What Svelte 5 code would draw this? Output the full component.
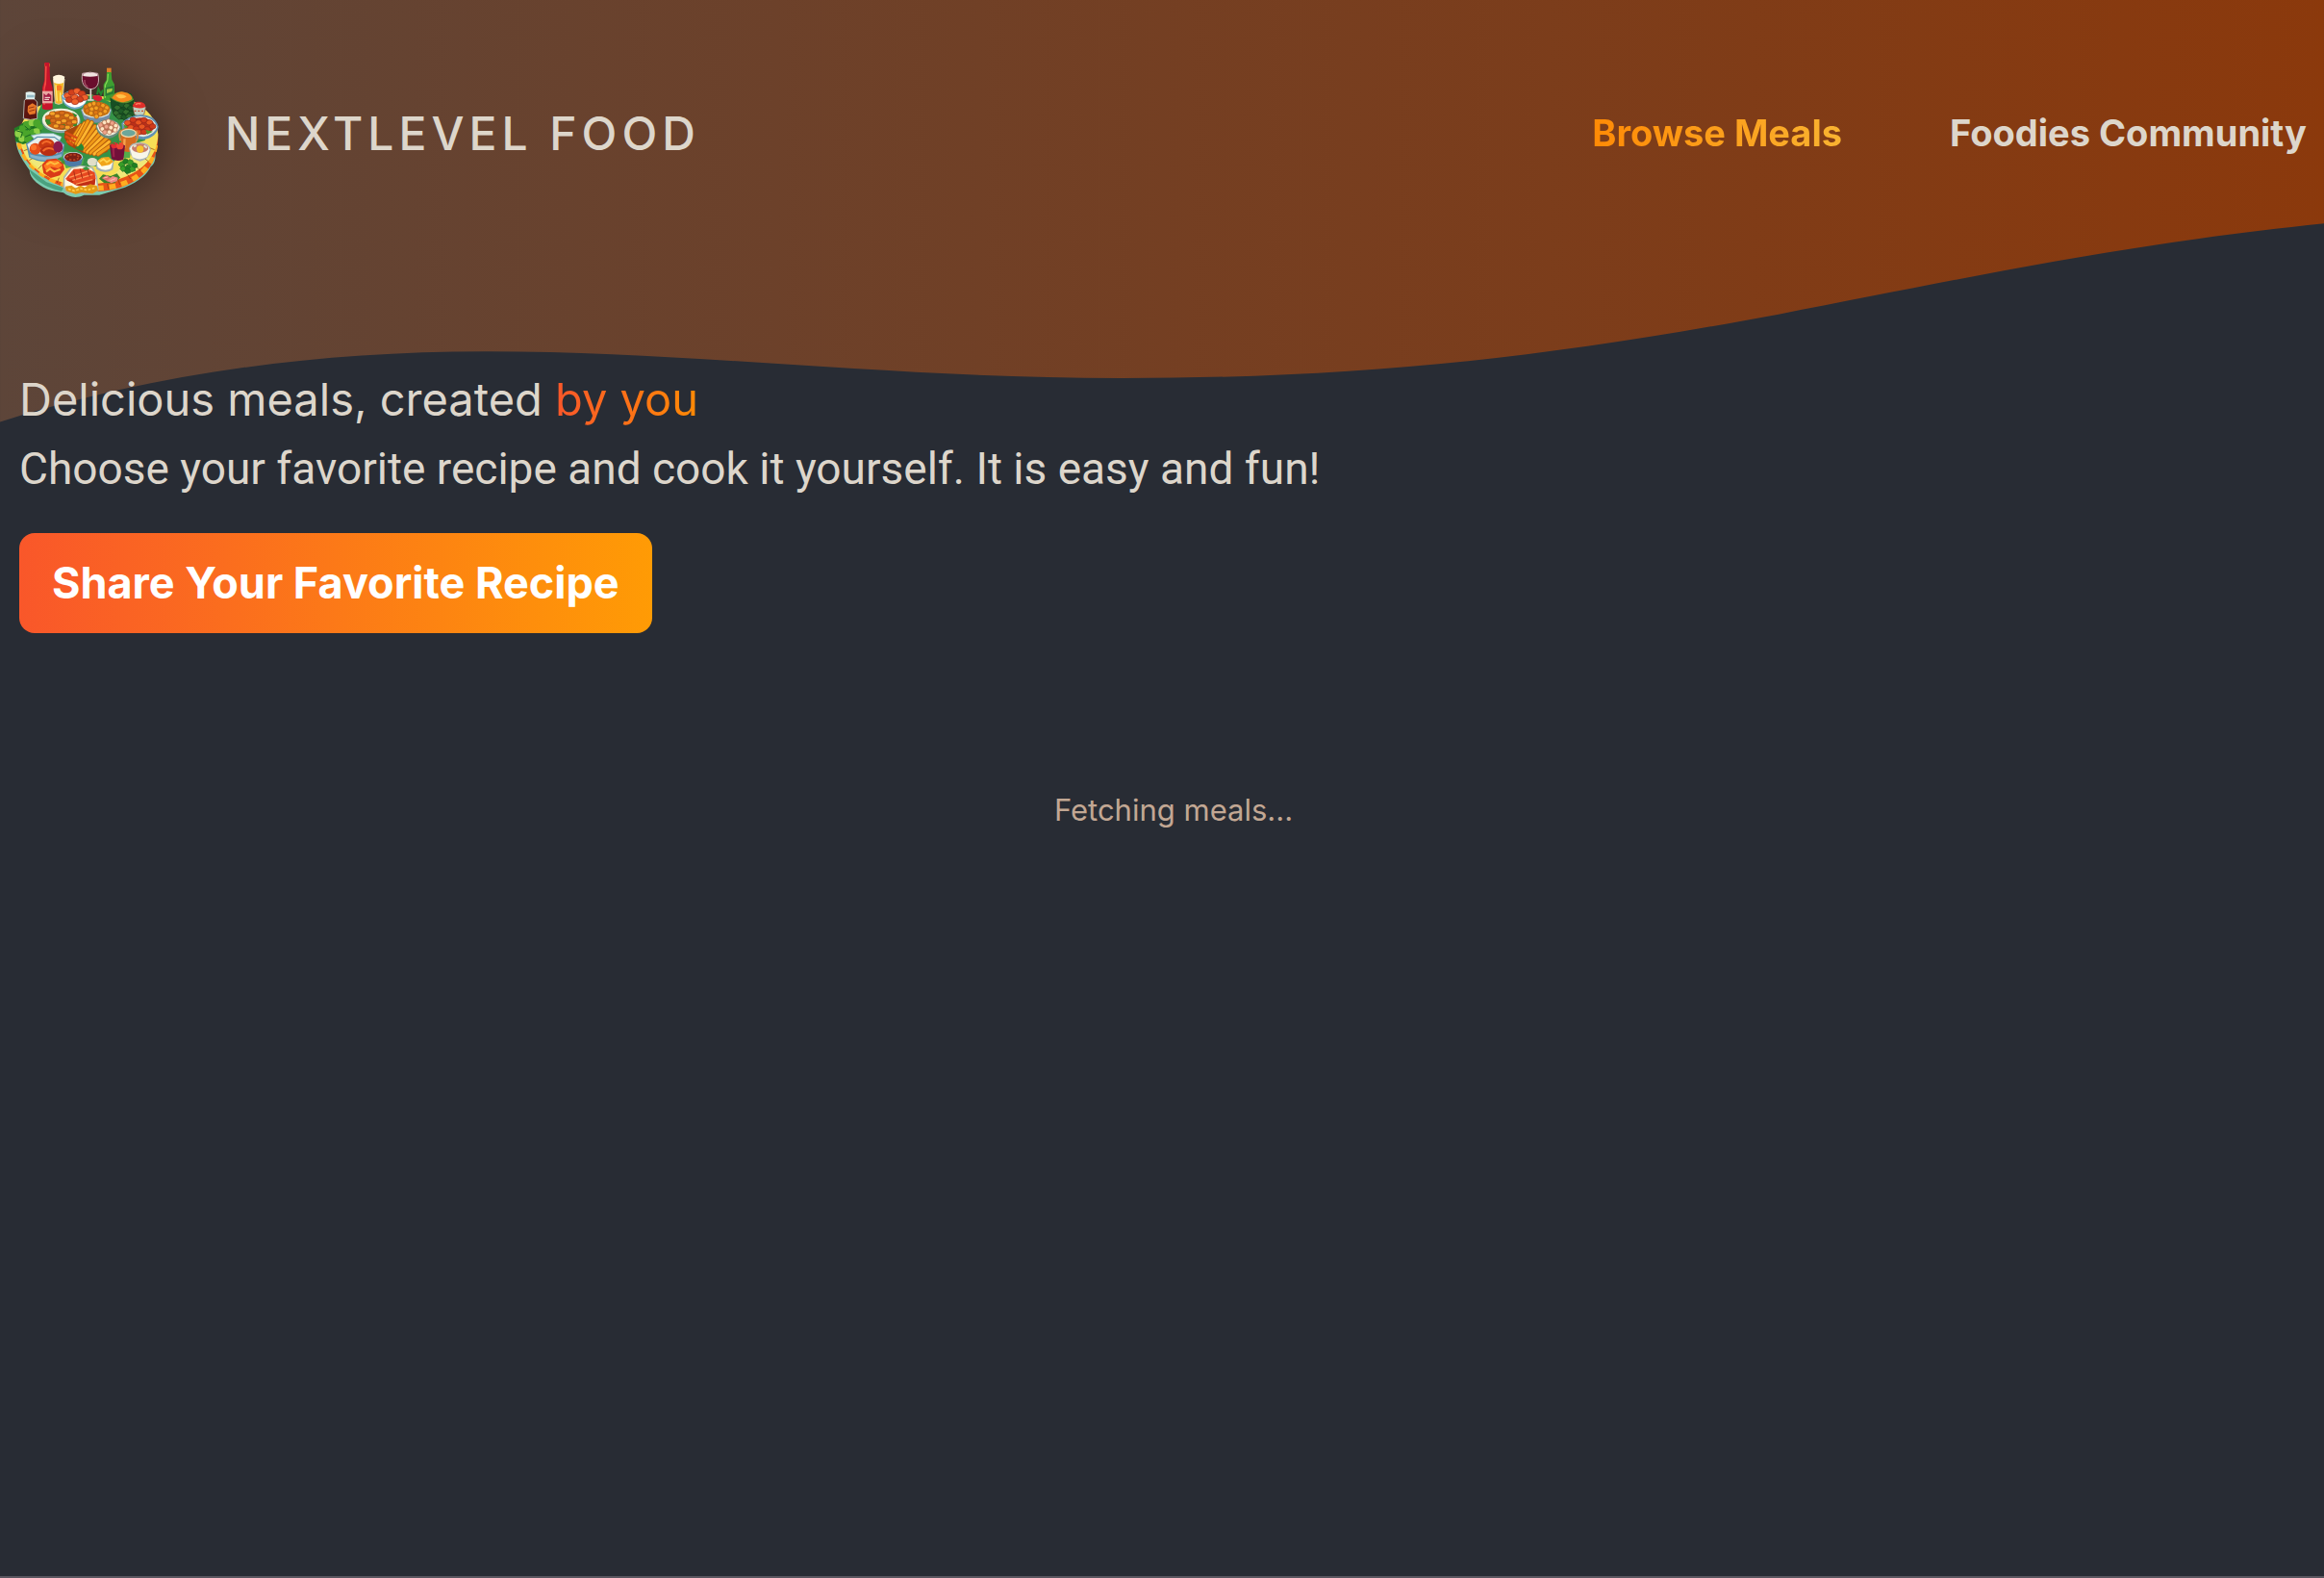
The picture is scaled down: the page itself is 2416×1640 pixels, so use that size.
<script lang="ts">
  const navLinks = [
    { label: 'Browse Meals', href: '/meals', active: true },
    { label: 'Foodies Community', href: '/community', active: false }
  ];

  // small round pieces of food: x, y
  const chickpeas = [
    [268, 213], [280, 207], [293, 203], [307, 204], [321, 209], [333, 216], [272, 225],
    [286, 220], [300, 217], [314, 221], [328, 227], [284, 233], [299, 231], [313, 235], [301, 243]
  ];
  const wings = [
    [211, 178], [224, 168], [240, 164], [255, 172], [264, 184], [216, 191], [233, 184], [249, 190], [234, 197]
  ];
  const noodles = [
    [150, 246], [163, 234], [178, 242], [193, 232], [208, 240], [222, 247], [165, 256],
    [182, 262], [199, 257], [216, 264], [231, 260], [174, 273], [193, 275], [210, 277]
  ];
  const curry = [
    [398, 263], [415, 254], [432, 262], [449, 255], [466, 262], [476, 274], [408, 277],
    [425, 281], [443, 275], [459, 283], [432, 292], [449, 291]
  ];
  const beans = [
    [314, 270], [326, 262], [338, 258], [350, 264], [361, 272], [319, 282],
    [332, 275], [346, 278], [359, 285], [327, 292], [341, 292]
  ];
  const fries = [
    [252, 272, 222, 318], [264, 264, 230, 322], [274, 258, 238, 328], [286, 262, 244, 334],
    [296, 274, 252, 338], [302, 288, 258, 344], [312, 296, 264, 350], [324, 302, 272, 354],
    [334, 310, 282, 357], [340, 322, 294, 360], [342, 336, 306, 361]
  ];
  const greens = [
    [58, 296], [70, 281], [84, 270], [99, 263], [115, 264], [124, 276], [113, 292],
    [96, 290], [80, 298], [68, 313], [87, 312], [104, 303]
  ];
  const kale = [
    [366, 215], [380, 206], [396, 210], [408, 217], [363, 232], [378, 226], [394, 229],
    [409, 234], [372, 243], [388, 245], [403, 243]
  ];
  const parsley = [
    [379, 393], [391, 383], [406, 386], [419, 396], [384, 406], [399, 402], [412, 407], [397, 413]
  ];
</script>

<div class="page">
  <svg class="wave" viewBox="0 0 1440 262" aria-hidden="true">
    <defs>
      <linearGradient id="wave-fill" x1="0%" y1="0%" x2="100%" y2="0%">
        <stop offset="0%" stop-color="#5d4539" />
        <stop offset="100%" stop-color="#8b390c" />
      </linearGradient>
    </defs>
    <path
      fill="url(#wave-fill)"
      d="M0,261.3C90,233,190,217.7,300,217.7C430,217.7,550,234.2,695,234.2C850,234.2,960,221,1102,194.7C1220,172,1310,152,1440,138.5L1440,0L0,0Z"
    />
  </svg>

  <header>
    <a class="logo" href="/">
      <svg viewBox="30 60 480 468" role="img" aria-label="A table full of food">
        <!-- table -->
        <path fill="#7bcbb0" d="M50 318C50 352 76 388 92 410C92 438 125 462 160 474L198 481C215 495 238 500 262 488L310 488L390 464C435 447 462 420 470 400C486 388 487 366 482 350Z" />
        <path fill="#4aa17f" d="M92 408L145 448L198 466L192 476C145 466 98 438 92 408Z" />
        <path fill="#e75317" d="M52 290C57 338 70 368 92 393C135 442 203 476 285 478C385 479 462 434 482 370C490 348 495 322 492 292Z" />
        <path fill="none" stroke="#ffad20" stroke-width="16" stroke-dasharray="20 18" d="M59 325C73 374 104 407 144 430C210 473 340 482 413 439C455 417 480 379 486 320" />
        <path fill="#f6df56" d="M62 294C64 260 86 222 130 207L265 173L410 192C460 218 491 255 493 299C492 353 459 399 408 423C340 461 212 466 151 432C97 405 63 360 62 294Z" />
        <path fill="#359247" d="M130 204L290 176L374 210L468 254L452 318L390 336L345 397L225 401L125 348L95 285Z" />
        <path fill="#efe879" d="M68 337L111 374L136 378L128 410C96 389 76 366 68 337ZM361 419L425 359L468 374C440 408 407 429 357 438Z" />
        <path fill="#54ad4b" d="M112 352L225 353L214 378L176 370L118 374ZM196 380L263 372L258 393L206 405ZM365 342L410 337L405 373L369 373Z" />
        <g fill="none" stroke="#8b3c0f" stroke-width="2">
          <path d="M74 350L88 345M91 380L106 371M119 407L130 395M146 431L154 417M178 450L184 434M338 469L335 453M374 456L368 440M407 438L398 424M438 413L427 401M464 384L451 374M482 347L467 341" />
        </g>

        <!-- bottles and glasses -->
        <path fill="#e8a21d" d="M139 78H155V88H139Z" />
        <path fill="#c6142b" d="M139 75H154L156 127L164 154V219Q149 227 132 219V153L139 129Z" />
        <path fill="#f24b42" d="M141 86H146L144 142L140 157V207H136V155L140 132Z" />
        <path fill="#e9a6a0" d="M132 164H164V202H132Z" />
        <path fill="#a41f45" d="M136 171L144 178L151 170L160 177V195H136Z" />
        <path fill="none" stroke="#fff0df" stroke-width="3" d="M140 184H156M139 190H153" />

        <path fill="#f3b928" stroke="#d1c5aa" stroke-width="3" d="M167 126H201L194 202Q183 208 172 202Z" />
        <path fill="#fff6dd" d="M165 119Q183 108 202 119L198 138Q182 145 168 137Z" />
        <path fill="#fa7822" d="M175 149Q185 140 193 149L191 162H177Z" />
        <path fill="none" stroke="#ffe774" stroke-width="4" d="M174 145L178 196M188 169V196" />

        <path fill="#6a0d2d" stroke="#c9aeb1" stroke-width="3" d="M257 109Q281 102 305 109C312 139 304 156 284 158C262 156 252 138 257 109Z" />
        <path fill="#efe3df" d="M259 110Q281 103 304 110V117Q281 122 259 117Z" />
        <path fill="none" stroke="#ddd8d4" stroke-width="5" d="M283 157V190M272 192H293" />
        <path fill="none" stroke="#a24960" stroke-width="4" d="M264 129Q263 145 274 151" />

        <path fill="#df7d28" d="M333 92H347V108H333Z" />
        <path fill="#3d9e31" d="M333 105H347L349 128L357 143V194H323V143L332 129Z" />
        <path fill="#86d754" d="M335 110H339L337 132L330 146V185H326V146L334 130Z" />
        <path fill="#277b33" d="M328 154L355 147V172L328 180Z" />
        <path fill="#a3c847" d="M333 158L351 155L349 165L333 171Z" />

        <path fill="#5b1510" stroke="#b0afaa" stroke-width="3" d="M76 193L82 188H106L116 198V250Q95 257 73 249Z" />
        <path fill="#e0f0ed" d="M80 168Q95 163 110 170L108 190H80Z" />
        <path fill="#94bac5" d="M84 176H107V184H84Z" />
        <path fill="#e87828" d="M87 211L101 202L114 210L110 235L92 238L86 228Z" />
        <path fill="none" stroke="#9d3712" stroke-width="3" d="M90 217L107 213M91 227L109 222" />

        <!-- leafy greens -->
        <path fill="#237a24" d="M44 280L59 272L75 260L98 254L121 257L132 275L126 293L101 320L72 330L48 321Z" />
        {#each greens as [x, y], i}
          <circle cx={x} cy={y} r={i % 2 ? 10 : 12} fill={i % 3 ? '#4aa52b' : '#8fd048'} />
        {/each}
        <path fill="none" stroke="#176520" stroke-width="3" d="M50 287L70 293L65 309M77 273L91 285L108 275M78 307L94 300L110 312" />
        <path fill="#dceef0" stroke="#7caab7" stroke-width="2" d="M97 302L131 296L166 296L192 307L186 319L109 316Z" />

        <!-- bowl of wings -->
        <path fill="#6ea6c4" d="M191 178Q230 143 273 178C272 205 256 221 232 221C210 219 194 204 191 178Z" />
        <path fill="#edf2ec" d="M194 179Q231 155 272 179Q235 218 194 179Z" />
        <path fill="#fff" d="M196 190Q232 210 270 191Q263 213 233 215Q208 214 196 190Z" />
        {#each wings as [x, y], i}
          <ellipse cx={x} cy={y} rx="11" ry="9" fill={i % 2 ? '#d2411d' : '#f0632c'} stroke="#9a2818" stroke-width="2" />
        {/each}

        <!-- bowl of chickpeas -->
        <path fill="#718da6" d="M252 222Q299 176 348 221L340 252Q301 274 262 252Z" />
        <path fill="#d8e2e0" d="M255 223Q300 188 346 223L338 239Q301 258 262 239Z" />
        <ellipse cx="301" cy="221" rx="42" ry="24" fill="#c77710" />
        {#each chickpeas as [x, y], i}
          <circle cx={x} cy={y} r="7" fill={i % 3 ? '#f4a122' : '#df7814'} stroke="#ae5915" stroke-width="2" />
        {/each}

        <!-- plate of noodles -->
        <ellipse cx="191" cy="257" rx="60" ry="38" fill="#8ba3a7" />
        <ellipse cx="190" cy="253" rx="58" ry="35" fill="#f0f0da" />
        <ellipse cx="192" cy="255" rx="50" ry="30" fill="#c96312" />
        <path fill="#328a2c" d="M140 254L154 248L159 266L148 270ZM225 230L241 239L234 246ZM226 270L242 261L238 279ZM158 229L172 226L166 238ZM191 268L202 266L205 281L195 284Z" />
        {#each noodles as [x, y], i}
          <rect x={x - 8} y={y - 6} width="17" height="12" rx="5" fill={i % 3 ? '#f6a329' : '#d86d19'} stroke="#9f4d18" stroke-width="2" />
        {/each}

        <!-- cabbage and pepper -->
        <path fill="#174f23" d="M343 184L358 170L409 171L419 193L417 226L405 250L374 252L355 240L346 214Z" />
        {#each kale as [x, y], i}
          <path fill={i % 2 ? '#1f5c28' : '#33702f'} stroke="#123c1b" stroke-width="2" d="M{x - 12} {y}L{x - 3} {y - 8}L{x + 9} {y - 5}L{x + 10} {y + 6}L{x - 2} {y + 9}Z" />
        {/each}
        <path fill="#62912e" d="M342 184Q360 163 384 167Q412 168 417 191Q383 216 342 184Z" />
        <path fill="#f78a1c" d="M349 185Q367 162 387 167Q413 172 411 190Q382 209 349 185Z" />
        <path fill="#ffc34a" d="M361 178Q377 169 395 181Q385 190 369 185Z" />
        <path fill="#d51d35" d="M288 180Q304 173 318 182Q322 194 304 196Q289 191 288 180Z" />
        <path fill="none" stroke="#23822e" stroke-width="6" d="M303 174L307 157L315 174L321 160" />

        <!-- egg cup -->
        <path fill="#c2d1bf" stroke="#81503e" stroke-width="2" d="M414 213H455L449 237Q433 247 419 236Z" />
        <path fill="none" stroke="#c65137" stroke-width="4" stroke-dasharray="6 5" d="M419 226H449" />
        <path fill="#df2f2a" d="M413 211Q416 196 434 197Q453 199 454 212Q435 224 413 211Z" />
        <path fill="none" stroke="#ff8265" stroke-width="4" d="M423 206Q430 201 439 204" />

        <!-- curry platter -->
        <path fill="#6092b4" d="M379 265Q398 241 437 238Q484 238 494 275Q490 306 449 315Q403 313 382 288Z" />
        <path fill="#e4e8dd" d="M383 267Q403 244 439 243Q480 245 490 275Q485 298 447 307Q400 301 383 267Z" />
        <ellipse cx="437" cy="273" rx="45" ry="26" fill="#bb3019" />
        {#each curry as [x, y], i}
          <ellipse cx={x} cy={y} rx="10" ry="8" fill={i % 2 ? '#d03a1a' : '#ea5722'} stroke="#972719" stroke-width="2" />
        {/each}
        <path fill="#52962d" d="M384 266L400 275L390 282ZM454 285L477 290L459 299Z" />

        <!-- fries -->
        <path fill="#a7450c" d="M202 289L250 267L279 258L304 287L337 308L342 334L334 354L301 363L258 356L213 332L200 309Z" />
        {#each fries as [x1, y1, x2, y2], i}
          <line {x1} {y1} {x2} {y2} stroke="#b85f0c" stroke-width="14" stroke-linecap="round" />
          <line {x1} {y1} {x2} {y2} stroke={i % 2 ? '#fdb52f' : '#f09a18'} stroke-width="9" stroke-linecap="round" />
        {/each}
        <path fill="none" stroke="#d94e13" stroke-width="8" d="M205 293L240 310M204 304L234 322M208 319L228 333" />
        <path fill="#268735" d="M245 335L254 327L262 339L258 350L243 347L233 340Z" />

        <!-- beans -->
        <path fill="#698b7e" d="M299 275Q306 252 339 251Q371 255 377 278Q372 306 338 312Q306 307 299 275Z" />
        <path fill="#f2ead9" d="M302 273Q311 255 339 254Q367 258 374 276Q369 298 339 304Q309 300 302 273Z" />
        <ellipse cx="338" cy="275" rx="30" ry="20" fill="#b86850" />
        {#each beans as [x, y], i}
          <circle cx={x} cy={y} r="7" fill={i % 3 ? '#ffe4c1' : '#eea289'} stroke="#b4714f" stroke-width="2" />
        {/each}

        <!-- tea glass and berries -->
        <path fill="none" stroke="#d58b45" stroke-width="6" d="M380 285Q368 293 376 319M424 287Q437 307 420 326" />
        <path fill="#d66c1f" d="M377 291L384 281Q404 274 424 288L422 347Q401 361 379 347Z" />
        <ellipse cx="401" cy="295" rx="23" ry="12" fill="#6ca69a" stroke="#eed4a5" stroke-width="4" />
        <path fill="#f5a350" d="M385 313H392L391 341H384Z" />
        <path fill="#711039" d="M342 333Q365 319 390 334L385 377Q366 386 348 375Z" />
        <path fill="#9b2149" d="M349 341H357L358 370H352Z" />
        <circle cx="356" cy="333" r="10" fill="#e42c31" />
        <circle cx="374" cy="335" r="11" fill="#ef4633" />
        <path fill="none" stroke="#42852d" stroke-width="4" d="M347 325L359 329M366 319L371 330" />

        <!-- meatballs -->
        <path fill="#568eac" d="M81 328L116 305L170 306L202 330L196 366Q147 399 91 371Z" />
        <path fill="#e8eee9" d="M85 330L117 309L170 310L198 332L192 353Q146 373 94 354Z" />
        <path fill="#86b2ca" d="M93 361Q143 379 192 360V368Q143 391 95 370Z" />
        <circle cx="110" cy="344" r="18" fill="#e84e19" />
        <circle cx="105" cy="340" r="9" fill="#fb7429" />
        <ellipse cx="145" cy="330" rx="25" ry="18" fill="#ca3a12" />
        <ellipse cx="152" cy="350" rx="27" ry="16" fill="#b92e13" />
        <path fill="none" stroke="#f46b2a" stroke-width="6" d="M131 329Q143 314 160 327M134 351Q148 335 170 347" />
        <ellipse cx="181" cy="338" rx="15" ry="18" fill="#8c1b4c" />

        <!-- sauce bowl -->
        <path fill="#4d7ba7" d="M195 370Q227 342 260 370L253 393Q228 408 203 392Z" />
        <ellipse cx="228" cy="369" rx="30" ry="15" fill="#c6d8dd" />
        <ellipse cx="228" cy="370" rx="27" ry="14" fill="#7b2015" />
        <path fill="none" stroke="#b94220" stroke-width="5" stroke-dasharray="7 5" d="M207 370Q228 354 248 370M216 377Q232 382 245 373" />

        <!-- egg bowl -->
        <path fill="#a8b3b5" d="M402 343Q407 323 438 324Q467 326 470 347Q465 377 437 383Q407 379 402 343Z" />
        <path fill="#f8f6e8" d="M405 343Q412 327 438 328Q465 330 467 347L459 369Q436 383 413 370Z" />
        <ellipse cx="437" cy="342" rx="26" ry="14" fill="#c77b6a" />
        <circle cx="437" cy="345" r="11" fill="#f9c42d" />
        <path fill="none" stroke="#e2e3ce" stroke-width="6" d="M417 337L425 333M449 334L458 341" />

        <!-- corn bowl -->
        <ellipse cx="288" cy="385" rx="16" ry="13" fill="#e1dfc9" />
        <path fill="#a0b0b3" d="M299 386Q324 358 355 382L352 409Q326 425 301 407Z" />
        <path fill="#fffbe9" d="M302 387Q326 366 352 384L346 406Q325 416 305 402Z" />
        <path fill="#f1a51a" d="M304 382L317 371L339 369L354 384L341 394L317 398Z" />
        <path fill="none" stroke="#ffd34e" stroke-width="5" d="M311 384L323 376L333 386L344 378" />

        <!-- tomato salad -->
        <path fill="#da3b18" d="M131 394L146 377L175 374L197 389L201 408L187 427L158 435L136 420Z" />
        <path fill="#ff7b20" d="M136 396L153 381L179 380L195 395L181 405L159 400L144 411Z" />
        <path fill="none" stroke="#ffbb3d" stroke-width="6" d="M145 393L158 386L170 392L184 386M144 415L156 406L169 415L188 408" />
        <path fill="#4d8b2d" d="M189 386L201 380L203 394Z" />

        <!-- salmon plate -->
        <path fill="#abb6ae" d="M198 431L221 401L252 395L290 401L303 429L308 474L286 485L210 482L196 465Z" />
        <path fill="#fff8df" d="M202 435L224 405L252 399L286 405L299 432L303 467L202 464Z" />
        <path fill="#e74720" d="M204 438L230 407L271 405L295 418L299 437L238 458Z" />
        <path fill="#c22e15" d="M231 452L298 437L296 457L243 460ZM207 442L232 438L227 451Z" />
        <path fill="none" stroke="#ff9656" stroke-width="4" d="M217 433L278 412M226 442L289 424M236 454L289 440" />
        <path fill="none" stroke="#a92e16" stroke-width="3" d="M230 413L236 440M250 407L257 436M273 409L280 431" />
        <path fill="#39973b" d="M257 405L269 399L280 407L266 411Z" />
        <path fill="#e39a16" d="M204 461L223 458L236 467L251 458L264 464L281 454L302 459L306 473L289 484L254 480L236 485L206 475Z" />
        <path fill="none" stroke="#ffcf4a" stroke-width="5" stroke-dasharray="8 5" d="M213 469L232 475L252 468L272 473L295 466" />

        <!-- ham and parsley -->
        <path fill="#3b842b" d="M309 437L321 424L345 429L365 421L375 434L357 451L325 451Z" />
        <path fill="#df706b" d="M317 435L333 426L347 436L337 447Z" />
        <path fill="#f08a88" d="M334 443L351 429L368 434L365 445L347 451Z" />
        <path fill="none" stroke="#ffc1a5" stroke-width="3" d="M323 435L336 432M344 443L360 437" />
        {#each parsley as [x, y], i}
          <path fill={i % 2 ? '#208022' : '#399f28'} stroke="#1a6822" stroke-width="2" d="M{x - 10} {y}L{x - 2} {y - 9}L{x + 8} {y - 5}L{x + 10} {y + 5}L{x - 2} {y + 9}Z" />
        {/each}
      </svg>
      <span>NextLevel Food</span>
    </a>

    <nav>
      <ul>
        {#each navLinks as link}
          <li><a href={link.href} class:active={link.active}>{link.label}</a></li>
        {/each}
      </ul>
    </nav>
  </header>

  <section class="hero">
    <h1>Delicious meals, created <span class="highlight">by you</span></h1>
    <p>Choose your favorite recipe and cook it yourself. It is easy and fun!</p>
    <a class="cta" href="/meals/share">Share Your Favorite Recipe</a>
  </section>

  <main>
    <p class="loading">Fetching meals...</p>
  </main>
</div>

<style>
  :global(body) {
    margin: 0;
    background: #282c34;
  }

  .page {
    position: relative;
    box-sizing: border-box;
    min-height: 100vh;
    border-bottom: 2px solid #5a565f;
    background: #282c34;
    color: #ddd6cb;
    font-family: Inter, 'Liberation Sans', sans-serif;
  }

  .wave {
    position: absolute;
    top: 0;
    left: 0;
    width: 100%;
    height: auto;
  }

  header {
    position: relative;
    display: flex;
    align-items: center;
    justify-content: space-between;
    padding: 60px 18px 0 10px;
  }

  .logo {
    display: flex;
    align-items: center;
    gap: 64px;
    color: #ddd6cb;
    font-size: 48px;
    font-weight: 500;
    letter-spacing: 5px;
    text-decoration: none;
    text-transform: uppercase;
  }

  .logo svg {
    width: 160px;
    height: 156px;
    filter: drop-shadow(0 0 24px rgba(0, 0, 0, 0.5));
  }

  nav ul {
    display: flex;
    gap: 112px;
    margin: 0;
    padding: 0;
    list-style: none;
  }

  nav a {
    color: #ddd6cb;
    font-size: 38px;
    font-weight: 700;
    text-decoration: none;
  }

  nav a.active {
    background: linear-gradient(90deg, #ff8a05, #f9b331);
    background-clip: text;
    color: transparent;
  }

  .hero {
    position: relative;
    display: flex;
    flex-direction: column;
    align-items: flex-start;
    padding: 170px 20px 0;
  }

  h1,
  .hero p {
    margin: 0 0 16px;
    font-weight: 400;
    line-height: 57px;
  }

  h1 {
    font-size: 47px;
  }

  .hero p {
    font-family: Roboto, 'Liberation Sans', sans-serif;
    font-size: 46px;
  }

  .highlight {
    background: linear-gradient(90deg, #f9572a, #ff8a05);
    background-clip: text;
    color: transparent;
  }

  .cta {
    margin-top: 22px;
    padding: 24px 34px;
    border-radius: 16px;
    background: linear-gradient(90deg, #f9572a, #ff9b05);
    color: #fff;
    font-size: 45px;
    font-weight: 700;
    line-height: 56px;
    text-decoration: none;
  }

  main {
    position: relative;
    padding: 164px 0 0 24px;
  }

  .loading {
    margin: 0;
    color: #c2a793;
    font-size: 31px;
    line-height: 40px;
    text-align: center;
  }
</style>
